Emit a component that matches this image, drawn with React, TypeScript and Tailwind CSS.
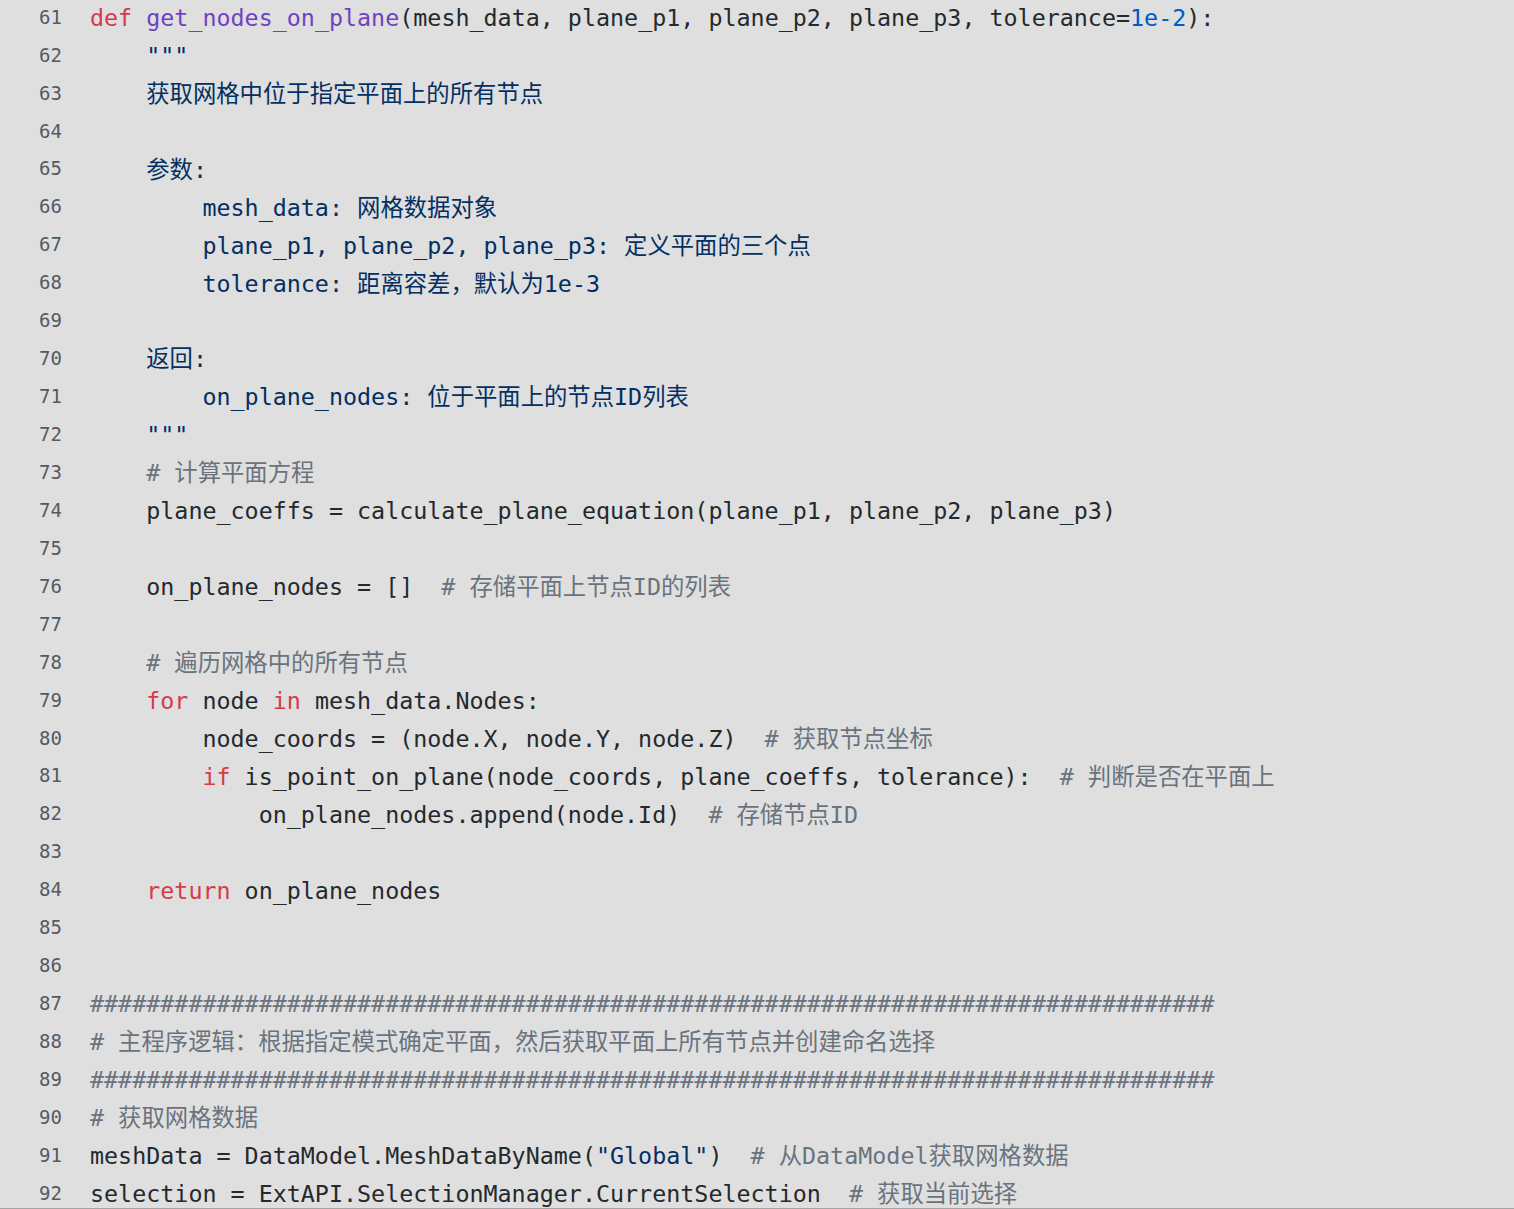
import React from "react";

type Seg = [string, string?];

const KW = "text-[#d73a49]";
const FN = "text-[#6f42c1]";
const NUM = "text-[#005cc5]";
const STR = "text-[#032f62]";
const CM = "text-[#6a737d]";

const lines: Seg[][] = [
  [["def", KW], [" "], ["get_nodes_on_plane", FN], ["(mesh_data, plane_p1, plane_p2, plane_p3, tolerance="], ["1e-2", NUM], ["):"]],
  [["    "], ['"""', STR]],
  [["    "], ["获取网格中位于指定平面上的所有节点", STR]],
  [],
  [["    "], ["参数:", STR]],
  [["        "], ["mesh_data: 网格数据对象", STR]],
  [["        "], ["plane_p1, plane_p2, plane_p3: 定义平面的三个点", STR]],
  [["        "], ["tolerance: 距离容差，默认为1e-3", STR]],
  [],
  [["    "], ["返回:", STR]],
  [["        "], ["on_plane_nodes: 位于平面上的节点ID列表", STR]],
  [["    "], ['"""', STR]],
  [["    "], ["# 计算平面方程", CM]],
  [["    plane_coeffs = calculate_plane_equation(plane_p1, plane_p2, plane_p3)"]],
  [],
  [["    on_plane_nodes = []  "], ["# 存储平面上节点ID的列表", CM]],
  [],
  [["    "], ["# 遍历网格中的所有节点", CM]],
  [["    "], ["for", KW], [" node "], ["in", KW], [" mesh_data.Nodes:"]],
  [["        node_coords = (node.X, node.Y, node.Z)  "], ["# 获取节点坐标", CM]],
  [["        "], ["if", KW], [" is_point_on_plane(node_coords, plane_coeffs, tolerance):  "], ["# 判断是否在平面上", CM]],
  [["            on_plane_nodes.append(node.Id)  "], ["# 存储节点ID", CM]],
  [],
  [["    "], ["return", KW], [" on_plane_nodes"]],
  [],
  [],
  [["################################################################################", CM]],
  [["# 主程序逻辑：根据指定模式确定平面，然后获取平面上所有节点并创建命名选择", CM]],
  [["################################################################################", CM]],
  [["# 获取网格数据", CM]],
  [["meshData = DataModel.MeshDataByName("], ['"Global"', STR], [")  "], ["# 从DataModel获取网格数据", CM]],
  [["selection = ExtAPI.SelectionManager.CurrentSelection  "], ["# 获取当前选择", CM]],
];

export default function App() {
  return (
    <div className="w-[1514px] h-[1209px] overflow-hidden bg-[#dfdfdf] border-b border-[#a3a3a3] box-border">
      <div className="mt-0 flex flex-col">
        {lines.map((segs, i) => (
          <div key={i} className="flex items-center h-[37.95px]">
            <div className="w-[62px] shrink-0 text-right text-[19px] text-[#555a5f] -translate-y-[2px] font-['DejaVu_Sans_Mono','Noto_Sans_CJK_SC',monospace]">
              {61 + i}
            </div>
            <div className="pl-[28px] whitespace-pre text-[23.35px] leading-[37.95px] text-[#24292e] font-['DejaVu_Sans_Mono','Noto_Sans_CJK_SC',monospace]">
              {segs.map((s, j) => (
                <span key={j} className={s[1] ?? ""}>
                  {s[0]}
                </span>
              ))}
            </div>
          </div>
        ))}
      </div>
    </div>
  );
}
